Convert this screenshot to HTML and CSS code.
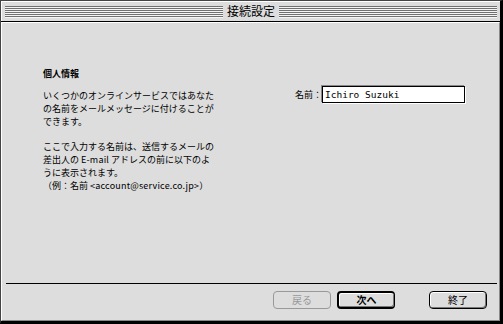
FILE: index.html
```html
<!DOCTYPE html>
<html lang="ja">
<head>
<meta charset="utf-8">
<link rel="stylesheet" href="styles.css">
</head>
<body>
<div class="window">
  <div class="titlebar">
    <div class="stripes"></div>
    <div class="title">接続設定</div>
    <div class="stripes"></div>
  </div>
  <div class="content">
    <div class="main">
      <div class="info">
        <div class="heading">個人情報</div>
        <p class="para">いくつかのオンラインサービスではあなた<br>の名前をメールメッセージに付けることが<br>できます。</p>
        <p class="para">ここで入力する名前は、送信するメールの<br>差出人の <span class="latin">E-mail</span> アドレスの前に以下のよ<br>うに表示されます。<br>（例：名前 <span class="latin">&lt;account@service.co.jp&gt;</span>）</p>
      </div>
      <div class="form">
        <span class="label">名前：</span>
        <div class="field">Ichiro Suzuki</div>
      </div>
    </div>
    <div class="divider"></div>
    <div class="buttons">
      <button class="btn btn-disabled">戻る</button>
      <button class="btn btn-next">次へ</button>
      <button class="btn btn-quit">終了</button>
    </div>
  </div>
</div>
</body>
</html>
```

FILE: styles.css
```css
html, body {
  margin: 0;
  padding: 0;
  background: #000;
}

body {
  width: 503px;
  height: 324px;
  overflow: hidden;
  font-family: "Noto Sans CJK JP", "Noto Sans", sans-serif;
  color: #000;
}

.window {
  width: 503px;
  height: 324px;
  box-sizing: border-box;
  border-left: 1px solid #444;
  border-top: 1px solid #444;
  border-right: 3px solid #000;
  border-bottom: 3px solid #000;
  background: #dddddd;
  display: flex;
  flex-direction: column;
}

.titlebar {
  height: 21px;
  box-sizing: border-box;
  border-bottom: 1px solid #000;
  display: flex;
  align-items: center;
  padding: 0 3px 0 4px;
  background: #dddddd;
  box-shadow: inset 1px 1px 0 #fff;
}

.stripes {
  flex: 1;
  height: 12px;
  margin-top: 1px;
  background: repeating-linear-gradient(to bottom, #707070 0 1px, #f4f4f4 1px 2px);
}

.title {
  padding: 0 4px;
  font-size: 12px;
  line-height: 16px;
}

.content {
  flex: 1;
  display: flex;
  flex-direction: column;
  border-left: 1px solid #fff;
  border-top: 1px solid #fff;
  border-right: 1px solid #888;
  border-bottom: 1px solid #888;
}

.main {
  flex: 1;
  display: flex;
  padding: 44px 0 0 41px;
}

.info {
  width: 190px;
  font-size: 9px;
  line-height: 13px;
  white-space: nowrap;
  -webkit-font-smoothing: none;
}

.heading {
  font-weight: bold;
  margin-bottom: 9px;
}

.para {
  margin: 0 0 12px 0;
}

.latin {
  letter-spacing: 0.2px;
}

.form {
  margin-left: 62px;
  margin-top: 19px;
  display: flex;
  align-items: flex-start;
  height: 17px;
}

.label {
  font-size: 9px;
  line-height: 17px;
  width: 27px;
}

.field {
  width: 143px;
  height: 17px;
  box-sizing: border-box;
  border: 1px solid #000;
  box-shadow: 1px 1px 0 #fff, -1px -1px 0 #888;
  background: #fff;
  font-family: "DejaVu Sans Mono", monospace;
  font-size: 9.5px;
  line-height: 15px;
  padding-left: 2px;
}

.divider {
  height: 1px;
  background: #000;
  margin: 0 2px 0 4px;
}

.buttons {
  display: flex;
  justify-content: flex-end;
  padding: 7px 12px 11px 0;
}

.btn {
  width: 58px;
  height: 18px;
  box-sizing: border-box;
  border: 1px solid #000;
  border-radius: 4px;
  background: #dddddd;
  box-shadow: inset 1px 1px 0 #fff, inset -1px -1px 0 #777;
  font-family: "Noto Sans CJK JP", sans-serif;
  font-size: 10px;
  line-height: 14px;
  padding: 0;
  margin: 0;
  color: #000;
}

.btn-disabled {
  border-color: #999;
  color: #999;
  box-shadow: none;
}

.btn-next {
  margin-left: 6px;
  font-weight: bold;
  border-width: 2px 1px 2px 2px;
}

.btn-quit {
  margin-left: 34px;
}
```
